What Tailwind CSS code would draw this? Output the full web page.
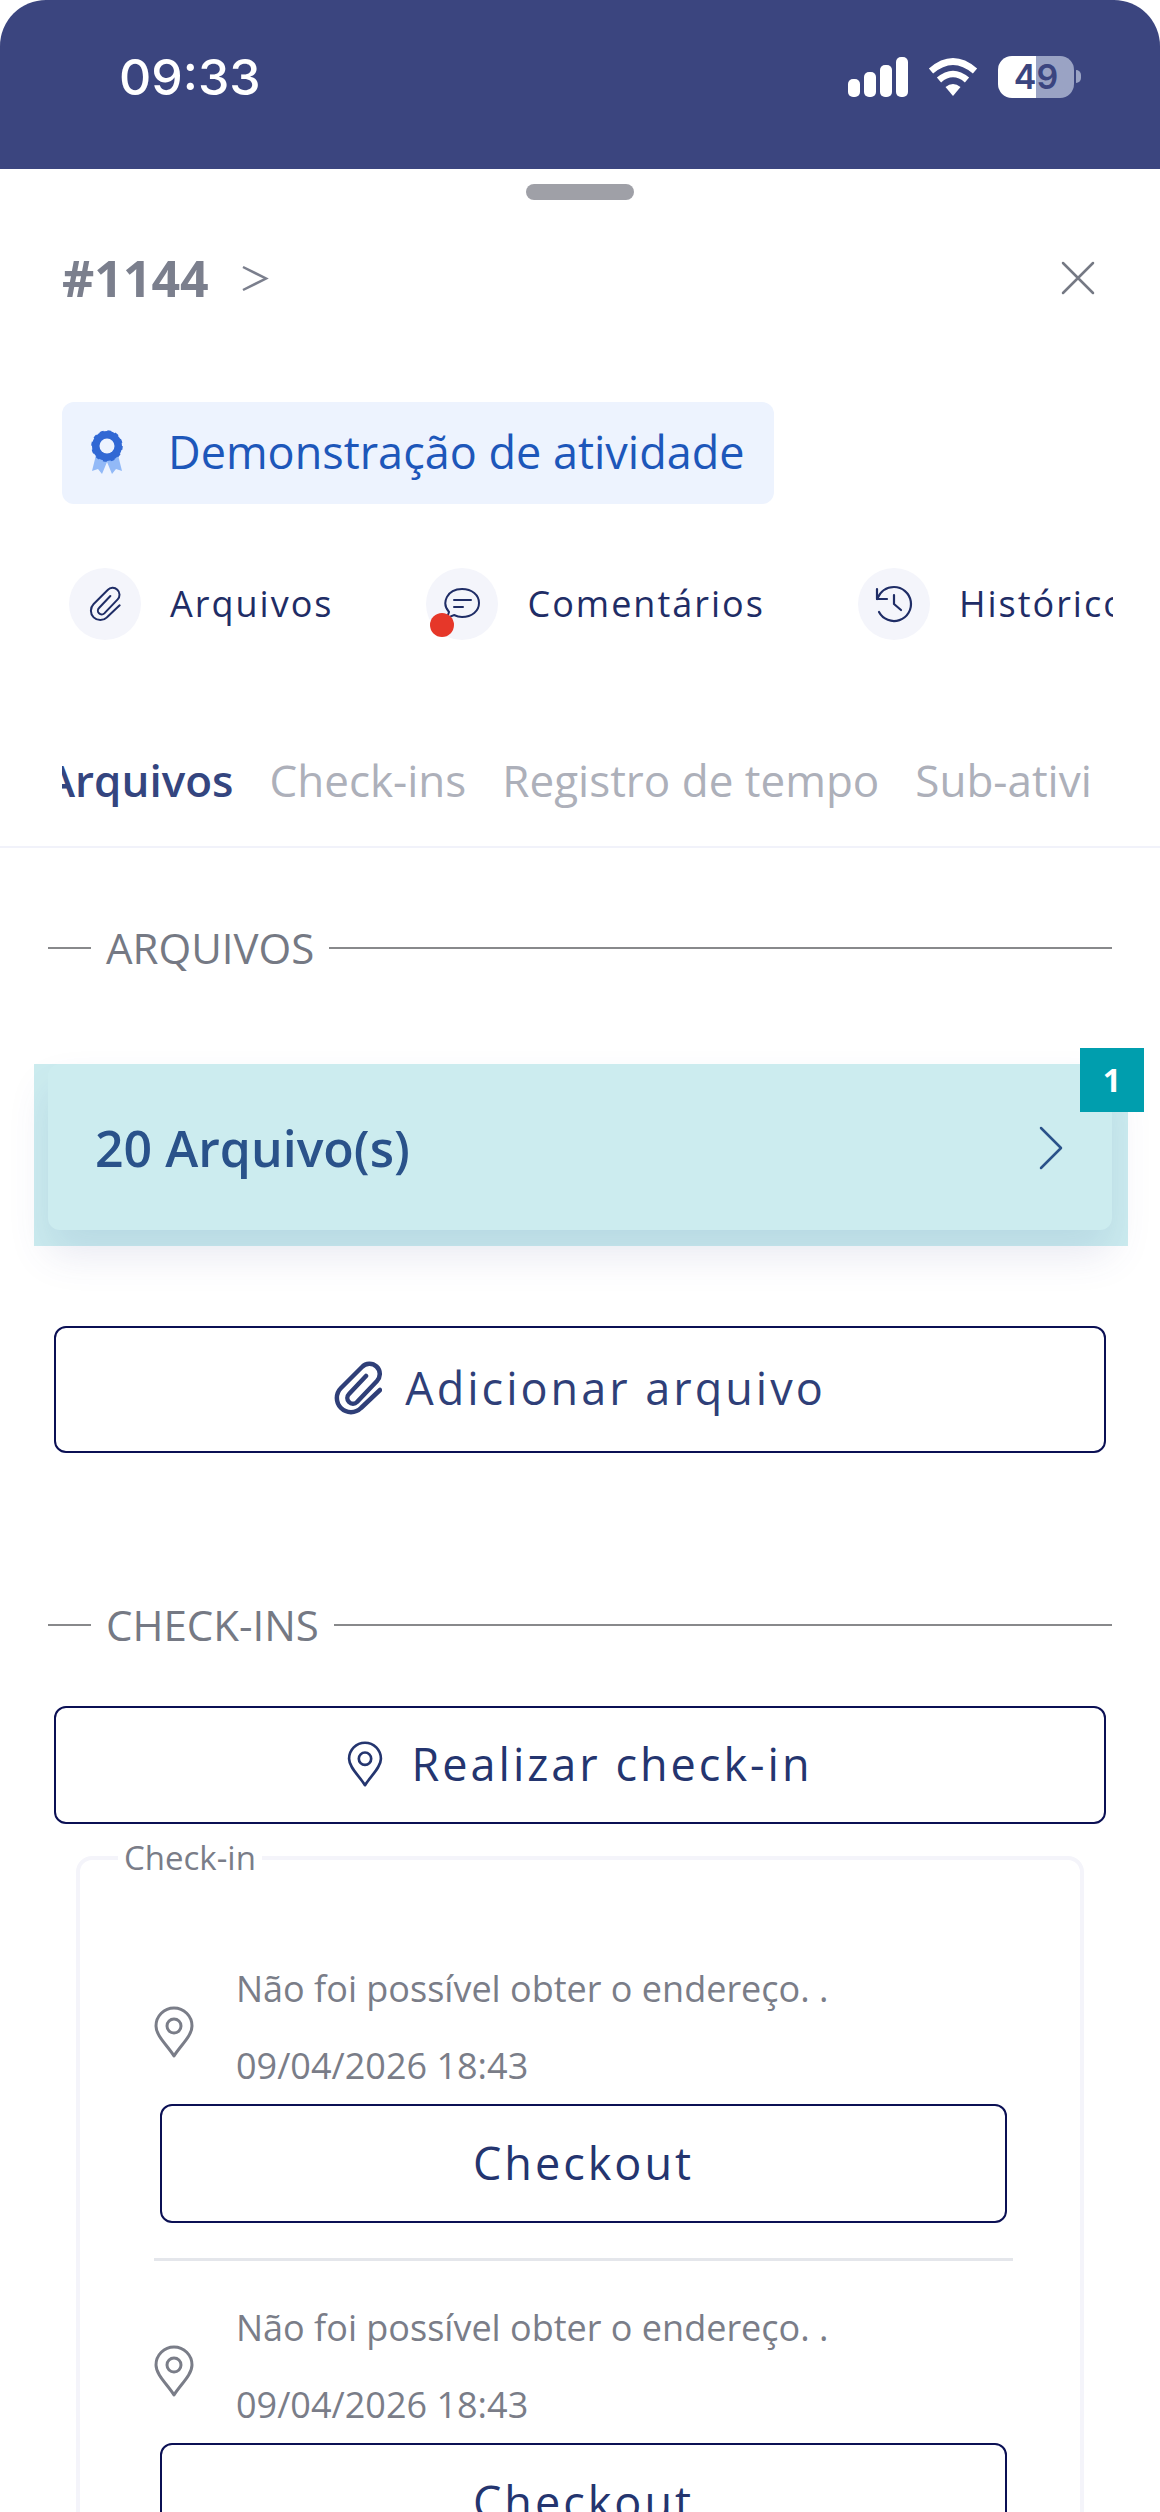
<!DOCTYPE html>
<html lang="pt-BR">
<head>
<meta charset="utf-8">
<meta name="viewport" content="width=device-width, initial-scale=1">
<title>Demonstração de atividade</title>
<script src="https://cdn.jsdelivr.net/npm/@tailwindcss/browser@4"></script>
</head>
<body class="bg-white">
<svg class="hidden" aria-hidden="true">
  <symbol id="clip" viewBox="0 0 48 54">
    <path d="M32 15 L15 33 A5.5 5.5 0 0 0 23 41 L43 20 A10 10 0 0 0 28 6 L7 27 A14 14 0 0 0 27 47 L46 29" fill="none" stroke="currentColor" stroke-linecap="round" stroke-linejoin="round"/>
  </symbol>
  <symbol id="pin" viewBox="0 0 40 52">
    <path d="M20 50 C14 40 2 30 2 20 A18 18 0 0 1 38 20 C38 30 26 40 20 50 Z" fill="none" stroke="currentColor" stroke-linejoin="round"/>
    <circle cx="20" cy="20" r="7" fill="none" stroke="currentColor"/>
  </symbol>
</svg>
<div class="flex h-screen flex-col overflow-hidden rounded-[46px] bg-white font-['Open_Sans',sans-serif] text-[#757984]">
  <header class="flex h-[169px] shrink-0 items-center justify-between bg-[#3b457f] pr-[79px] pb-4 pl-[119px] text-white">
    <time class="font-['Inter',sans-serif] text-[50px] leading-[60px] font-medium">09:33</time>
    <div class="flex items-center gap-5">
      <svg class="h-[42px] w-[60px]" viewBox="0 0 60 42" fill="#fff" role="img" aria-label="Sinal">
        <rect x="0" y="23" width="12" height="18" rx="5"/><rect x="16" y="16" width="12" height="25" rx="5"/><rect x="32" y="9" width="12" height="32" rx="5"/><rect x="48" y="1" width="12" height="40" rx="5"/>
      </svg>
      <svg class="h-[38px] w-[50px]" viewBox="0 0 50 38" role="img" aria-label="Wi-Fi">
        <path d="M3 13 Q25 -6 47 13" fill="none" stroke="#fff" stroke-width="6.5"/>
        <path d="M11 22 Q25 10 39 22" fill="none" stroke="#fff" stroke-width="6.5"/>
        <path d="M17.5 29 Q25 23 32.5 29 L25 38 Z" fill="#fff"/>
      </svg>
      <div class="flex items-center gap-[2px]" role="img" aria-label="Bateria 49%">
        <div class="flex h-[42px] w-[76px] items-center justify-center rounded-[14px] bg-linear-to-r from-white from-50% to-[#9aa3c4] to-50% font-['Inter',sans-serif] text-[34px] leading-none font-semibold text-[#3b457f]">49</div>
        <div class="h-[13px] w-[5px] rounded-r-full bg-[#9aa3c4]"></div>
      </div>
    </div>
  </header>

  <div class="mx-auto mt-[15px] h-4 w-[108px] shrink-0 rounded-full bg-[#9fa0a7]"></div>

  <div class="mt-12 flex shrink-0 items-center justify-between px-[62px]">
    <h1 class="flex items-center gap-8 text-[50px] leading-[60px] font-bold text-[#7b7f8d]">#1144
      <svg class="h-7 w-7" viewBox="0 0 28 28" fill="none" stroke="currentColor" stroke-width="2.5"><path d="M2 3 L25 14.500 L2 26"/></svg>
    </h1>
    <button type="button" aria-label="Fechar">
      <svg class="h-10 w-10" viewBox="0 0 40 40" fill="none" stroke="#757984" stroke-width="2.5" stroke-linecap="round"><path d="M5 5 L35 35 M35 5 L5 35"/></svg>
    </button>
  </div>

  <div class="mt-[94px] ml-[62px] flex shrink-0 items-center gap-[45px] self-start rounded-xl bg-[#edf3fe] pt-5 pr-[29px] pb-[22px] pl-[29px]">
    <svg class="h-11 w-8" viewBox="0 0 32 44" aria-hidden="true">
      <path d="M5 25 L1 41 L7 39 L11 44 L16 32 L21 44 L25 39 L31 41 L27 25 Z" fill="#92b9f7"/>
      <circle cx="16" cy="16" r="15" fill="#3168d4"/>
      <circle cx="16" cy="16" r="15" fill="none" stroke="#3168d4" stroke-width="1.500" stroke-dasharray="4 3.850"/>
      <circle cx="16" cy="16" r="7.500" fill="#edf3fe"/>
    </svg>
    <span class="text-[45px] leading-[60px] text-[#1d57ba]">Demonstração de atividade</span>
  </div>

  <nav class="mt-16 mr-[47px] ml-[69px] flex shrink-0 gap-[93px] overflow-hidden text-[36px] leading-[72px] tracking-[2px] whitespace-nowrap text-[#1f2d66]">
    <a href="#arquivos" class="flex shrink-0 items-center gap-[29px]">
      <span class="flex h-[72px] w-[72px] items-center justify-center rounded-full bg-[#f4f5fb]"><svg class="h-9 w-8 stroke-3"><use href="#clip"/></svg></span>
      Arquivos
    </a>
    <a href="#comentarios" class="flex shrink-0 items-center gap-[29px]">
      <span class="relative flex h-[72px] w-[72px] items-center justify-center rounded-full bg-[#f4f5fb]">
        <svg class="h-9 w-9" viewBox="0 0 36 36" fill="none" stroke="currentColor" stroke-width="2" stroke-linecap="round"><path d="M5 26 C-3 17 3 3 18 3 C28 3 35 9 35 17 C35 25 28 31 18 31 C15 31 12 30 10 29 L3 32 Z"/><path d="M10 14 H27 M10 21 H19"/></svg>
        <i class="absolute bottom-[3px] left-1 h-6 w-6 rounded-full bg-[#e63729]"></i>
      </span>
      Comentários
    </a>
    <a href="#historico" class="flex shrink-0 items-center gap-[29px]">
      <span class="flex h-[72px] w-[72px] items-center justify-center rounded-full bg-[#f4f5fb]"><svg class="h-10 w-10" viewBox="0 0 40 40" fill="none" stroke="currentColor" stroke-width="2.200" stroke-linecap="round" stroke-linejoin="round"><path d="M3 5 V15 H13"/><path d="M3 15 C7 6 13 3 20 3 A17 17 0 1 1 5 28"/><path d="M20 11 V20 L27 26"/></svg></span>
      Histórico
    </a>
  </nav>

  <div class="mt-[110px] shrink-0 border-b-2 border-[#f1f2fa] px-[62px] pb-9">
    <div class="overflow-hidden">
      <div class="-ml-4 flex gap-9 text-[44px] leading-[60px] whitespace-nowrap text-[#adb0ba]" role="tablist">
        <button type="button" role="tab" aria-selected="true" class="shrink-0 font-semibold text-[#34457f]">Arquivos</button>
        <button type="button" role="tab" class="shrink-0">Check-ins</button>
        <button type="button" role="tab" class="shrink-0">Registro de tempo</button>
        <button type="button" role="tab" class="shrink-0">Sub-ativi</button>
      </div>
    </div>
  </div>

  <section class="mt-[70px] shrink-0" id="arquivos">
    <h2 class="mx-12 flex items-center gap-[15px] text-[42px] leading-[60px]">
      <span class="h-[2px] w-[43px] bg-[#88898b]"></span>ARQUIVOS<span class="h-[2px] flex-1 bg-[#88898b]"></span>
    </h2>
    <div class="relative mx-12 mt-[86px]">
      <button type="button" class="flex h-[166px] w-full items-center justify-between rounded-xl bg-white pt-[2px] pr-[49px] pl-[47px] text-[50px] leading-[60px] font-semibold text-[#343f81] shadow-[0_24px_40px_0_rgba(70,80,150,0.13)]">
        20 Arquivo(s)
        <svg class="h-11 w-6" viewBox="0 0 24 44" fill="none" stroke="currentColor" stroke-width="2.500" stroke-linecap="round" stroke-linejoin="round"><path d="M2 2 L22 22 L2 42"/></svg>
      </button>
      <div class="pointer-events-none absolute top-0 -right-4 -bottom-4 -left-[14px] bg-[#00a0ae]/20"></div>
      <span class="absolute -top-4 -right-8 flex h-16 w-16 items-center justify-center bg-[#009eae] text-[32px] font-bold text-white">1</span>
    </div>
    <div class="mx-[54px] mt-24">
      <button type="button" class="flex h-[127px] w-full items-center justify-center gap-[23px] rounded-xl border-2 border-[#0b1054] pb-1 text-[45px] font-medium tracking-[3px] text-[#2f3f78]">
        <svg class="h-[54px] w-12 stroke-[4.5]"><use href="#clip"/></svg>Adicionar arquivo
      </button>
    </div>
  </section>

  <section class="mt-[142px] shrink-0">
    <h2 class="mx-12 flex items-center gap-[15px] text-[42px] leading-[60px]">
      <span class="h-[2px] w-[43px] bg-[#88898b]"></span>CHECK-INS<span class="h-[2px] flex-1 bg-[#88898b]"></span>
    </h2>
    <div class="mx-[54px] mt-[51px]">
      <button type="button" class="flex h-[118px] w-full items-center justify-center gap-7 rounded-xl border-2 border-[#0b1054] pb-[2px] text-[45px] tracking-[3px] text-[#24356f]">
        <svg class="h-[46px] w-9 stroke-3"><use href="#pin"/></svg>Realizar check-in
      </button>
    </div>
    <fieldset class="mx-[76px] mt-[14px] rounded-2xl border-4 border-[#f4f4fa] pr-[67px] pl-[74px] text-[36px] text-[#7a7d88]">
      <legend class="-ml-9 px-[6px] text-[33px] leading-10">Check-in</legend>
      <ul class="pt-[72px]">
        <li>
          <div class="flex items-center gap-[42px]">
            <svg class="mt-[10px] h-[52px] w-10 stroke-3"><use href="#pin"/></svg>
            <p class="leading-[77px]">Não foi possível obter o endereço. .<br>09/04/2026 18:43</p>
          </div>
          <div class="px-[6px]">
            <button type="button" class="block h-[119px] w-full rounded-xl border-2 border-[#0b1054] pb-[2px] text-[45px] tracking-[3px] text-[#24356f]">Checkout</button>
          </div>
        </li>
        <li class="mt-[35px] border-t-3 border-[#e4e6eb] pt-7">
          <div class="flex items-center gap-[42px]">
            <svg class="mt-[10px] h-[52px] w-10 stroke-3"><use href="#pin"/></svg>
            <p class="leading-[77px]">Não foi possível obter o endereço. .<br>09/04/2026 18:43</p>
          </div>
          <div class="px-[6px]">
            <button type="button" class="block h-[119px] w-full rounded-xl border-2 border-[#0b1054] pb-[2px] text-[45px] tracking-[3px] text-[#24356f]">Checkout</button>
          </div>
        </li>
      </ul>
    </fieldset>
  </section>
</div>
</body>
</html>
